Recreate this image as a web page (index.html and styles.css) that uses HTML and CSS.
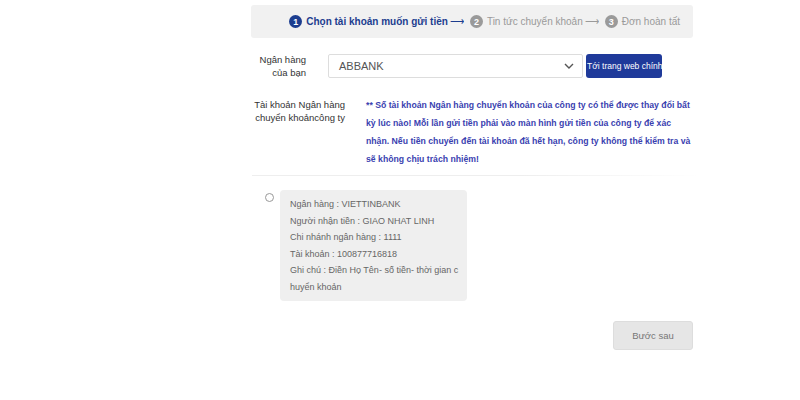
FILE: index.html
```html
<!DOCTYPE html>
<html lang="vi">
<head>
    <meta charset="UTF-8">
    <title>Gửi tiền</title>
    <link rel="stylesheet" href="styles.css">
</head>
<body>
    <div class="page">
        <!-- Steps -->
        <div class="steps">
            <span class="step active"><span class="num">1</span>Chọn tài khoản muốn gửi tiền</span>
            <span class="arrow active">&#10230;</span>
            <span class="step"><span class="num">2</span>Tin tức chuyển khoản</span>
            <span class="arrow">&#10230;</span>
            <span class="step"><span class="num">3</span>Đơn hoàn tất</span>
        </div>

        <!-- Bank select -->
        <div class="row bank-row">
            <label class="label bank-label">Ngân hàng<br>của bạn</label>
            <div class="select">
                <span>ABBANK</span>
                <svg width="10" height="6" viewBox="0 0 10 6"><path d="M1 1l4 4 4-4" fill="none" stroke="#555" stroke-width="1.4"/></svg>
            </div>
            <button class="web-btn">Tới trang web chính</button>
        </div>

        <div class="row note-row">
            <div class="label note-label">Tài khoản Ngân hàng<br>chuyển khoảncông ty</div>
            <p class="note">** Số tài khoản Ngân hàng chuyển khoản của công ty có thể được thay đổi bất<br>kỳ lúc nào! Mỗi lần gửi tiền phải vào màn hình gửi tiền của công ty để xác<br>nhận. Nếu tiền chuyển đến tài khoản đã hết hạn, công ty không thể kiểm tra và<br>sẽ không chịu trách nhiệm!</p>
        </div>

        <div class="divider"></div>

        <!-- Accounts -->
        <div class="account">
            <span class="radio"></span>
            <div class="card">
                <div>Ngân hàng : VIETTINBANK</div>
                <div>Người nhận tiền : GIAO NHAT LINH</div>
                <div>Chi nhánh ngân hàng : 1111</div>
                <div>Tài khoản : 100877716818</div>
                <div>Ghi chú : Điền Họ Tên- số tiền- thời gian c<br>huyển khoản</div>
            </div>
        </div>

        <div class="actions">
            <button class="next-btn">Bước sau</button>
        </div>
    </div>
</body>
</html>
```

FILE: styles.css
```css
/* General */
body {
    margin: 0;
    background: #fff;
    font-family: "Liberation Sans", Arial, sans-serif;
    color: #333;
}

.page {
    width: 442px;
    margin-left: 251px;
    padding-top: 5px;
}

/* Steps */
.steps {
    height: 33px;
    background: #f1f1f1;
    border-radius: 3px;
    display: flex;
    align-items: center;
    justify-content: flex-end;
    padding-right: 13px;
    font-size: 10px;
    color: #9a9a9a;
    white-space: nowrap;
}

.step {
    display: flex;
    align-items: center;
    flex-shrink: 0;
}

.step .num {
    width: 13px;
    height: 13px;
    border-radius: 50%;
    background: #9a9a9a;
    color: #fff;
    font-size: 9px;
    font-weight: bold;
    display: flex;
    align-items: center;
    justify-content: center;
    margin-right: 4px;
}

.step.active {
    color: #1c3d8f;
    font-weight: bold;
}

.step.active .num {
    background: #1c3d8f;
}

.arrow {
    font-size: 10px;
    transform: scaleY(1.3);
    margin: 0 6px 0 2px;
    color: #9a9a9a;
    flex-shrink: 0;
}

.arrow.active {
    color: #1c3d8f;
}

/* Form rows */
.row {
    display: flex;
}

.label {
    font-size: 9.5px;
    color: #333;
    text-align: right;
    line-height: 13px;
    white-space: nowrap;
    flex-shrink: 0;
}

.bank-row {
    margin-top: 15px;
    align-items: center;
}

.bank-label {
    width: 55px;
    margin-right: 22px;
}

.select {
    width: 255px;
    height: 24px;
    box-sizing: border-box;
    border: 1px solid #ddd;
    border-radius: 2px;
    display: flex;
    align-items: center;
    justify-content: space-between;
    padding: 0 8px 0 10px;
    font-size: 11px;
    color: #555;
}

.web-btn {
    width: 76px;
    height: 24px;
    margin-left: 3px;
    padding: 0 0 0 1px;
    border: none;
    border-radius: 3px;
    background: #1f3a9a;
    color: #fff;
    font-family: inherit;
    font-size: 8.5px;
    white-space: nowrap;
    overflow: hidden;
    text-align: left;
}

.note-row {
    margin-top: 17px;
}

.note-label {
    width: 94px;
    margin-right: 21px;
    margin-top: 2px;
}

.note {
    margin: 0;
    width: 330px;
    font-size: 8.7px;
    font-weight: bold;
    line-height: 18px;
    color: #3a3fb0;
    white-space: nowrap;
}

.divider {
    height: 1px;
    background: linear-gradient(to right, #eee 60%, #fff);
    margin: 7px 0 0 1px;
    width: 448px;
}

/* Account card */
.account {
    display: flex;
    align-items: flex-start;
    margin-top: 14px;
    padding-left: 14px;
}

.radio {
    width: 7px;
    height: 7px;
    border: 1px solid #999;
    border-radius: 50%;
    margin-top: 3px;
    margin-right: 6px;
}

.card {
    width: 167px;
    background: #efefef;
    border-radius: 4px;
    padding: 6px 10px 6px 10px;
    font-size: 9px;
    line-height: 16.5px;
    color: #666;
    white-space: nowrap;
}

.actions {
    display: flex;
    justify-content: flex-end;
    margin-top: 20px;
}

.next-btn {
    width: 80px;
    height: 29px;
    background: #e6e6e6;
    border: 1px solid #ddd;
    border-radius: 3px;
    color: #777;
    font-family: inherit;
    font-size: 9.5px;
}
```
